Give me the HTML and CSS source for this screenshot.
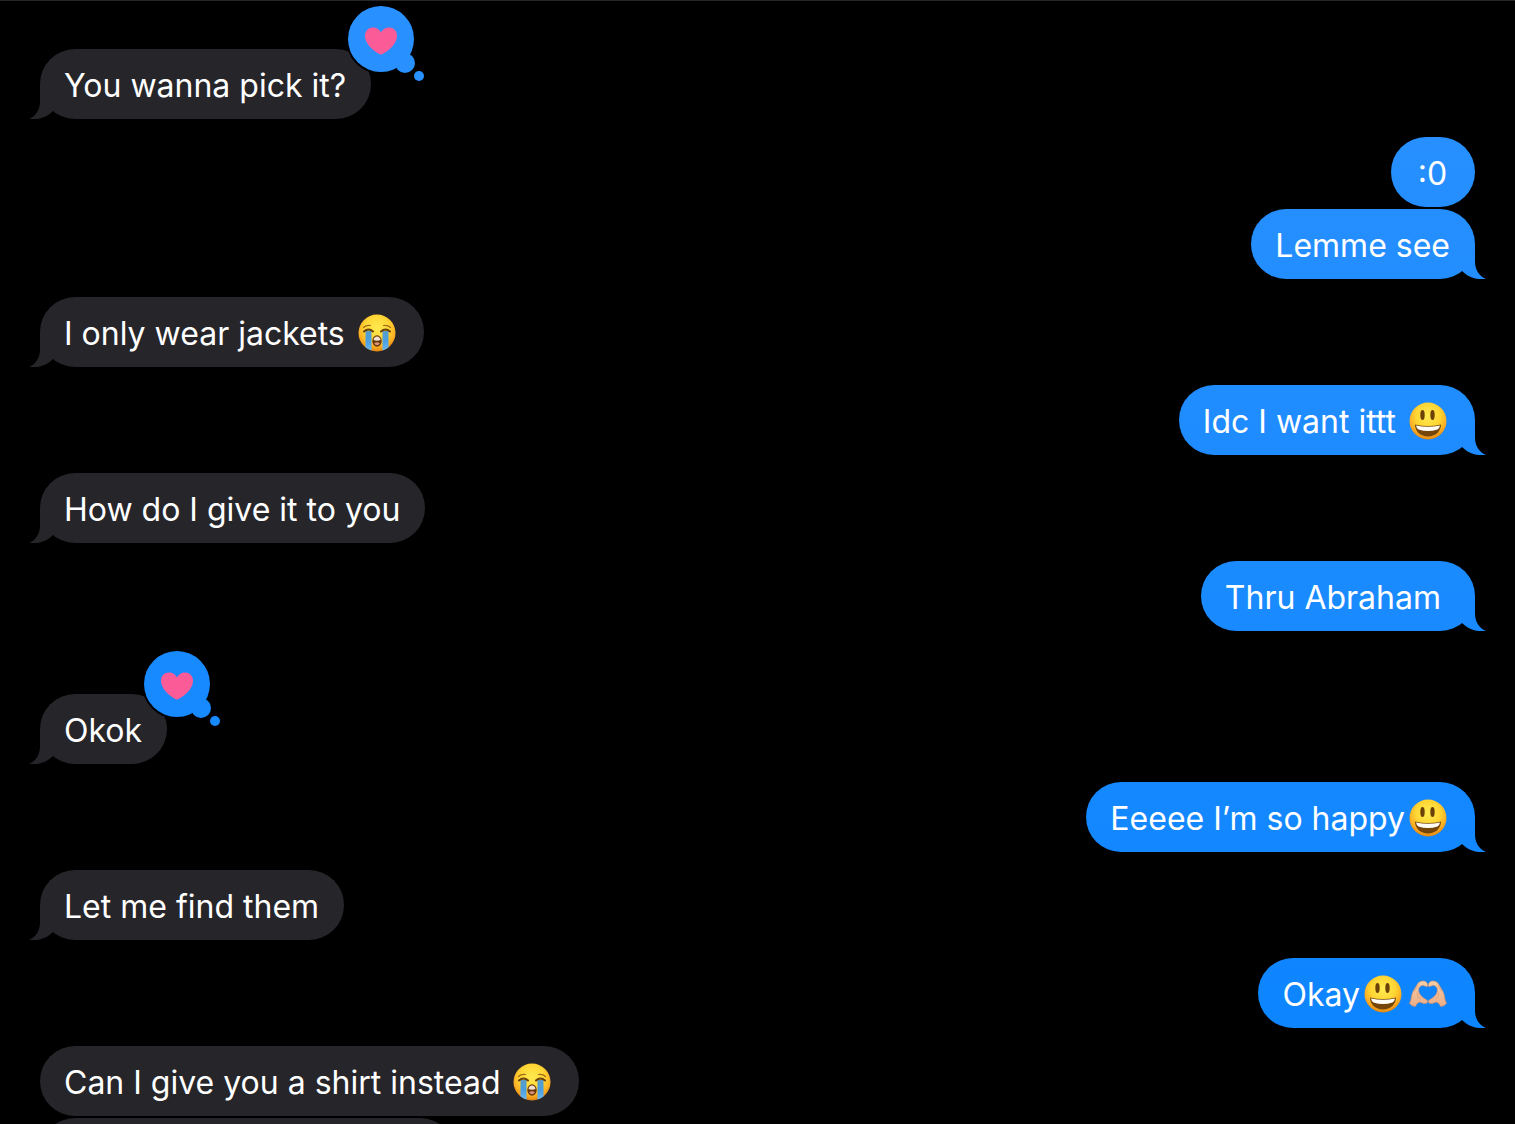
FILE: index.html
```
<!DOCTYPE html>
<html lang="en">
<head>
    <meta charset="UTF-8">
    <meta name="viewport" content="width=device-width, initial-scale=1.0">
    <title>Messages</title>
    <link rel="stylesheet" href="styles.css">
</head>
<body>
    <!-- Shared drawings -->
    <svg class="symbols" aria-hidden="true">
        <defs>
            <radialGradient id="face" cx="50%" cy="36%" r="66%">
                <stop offset="0" stop-color="#ffea50"/>
                <stop offset="0.5" stop-color="#ffd634"/>
                <stop offset="0.78" stop-color="#fbae22"/>
                <stop offset="1" stop-color="#dc7d0e"/>
            </radialGradient>
            <linearGradient id="tear" x1="0" y1="0" x2="0" y2="1">
                <stop offset="0" stop-color="#5a9cc4"/>
                <stop offset="0.5" stop-color="#4a9fe2"/>
                <stop offset="1" stop-color="#68b8f0"/>
            </linearGradient>
            <linearGradient id="skin" x1="0" y1="0" x2="0" y2="1">
                <stop offset="0" stop-color="#f9cfa6"/>
                <stop offset="1" stop-color="#eaac86"/>
            </linearGradient>
        </defs>
        <symbol id="smile" viewBox="0 0 38 38">
            <circle cx="19" cy="19" r="18.5" fill="url(#face)"/>
            <ellipse cx="13.5" cy="13" rx="2.2" ry="5" fill="#6b4108"/>
            <ellipse cx="23.5" cy="13" rx="2.2" ry="5" fill="#6b4108"/>
            <path d="M6 22.5Q19 25.5 32 22.5C32 29.5 26.5 34.5 19 34.5S6 29.5 6 22.5Z" fill="#754509"/>
            <path d="M7 23.5Q19 26 31 23.5Q30.5 26.5 28.5 27.5Q19 30.5 9.5 27.5Q7.5 26.5 7 23.5Z" fill="#fffdf5"/>
        </symbol>
        <symbol id="sob" viewBox="0 0 38 38">
            <circle cx="19" cy="19" r="18.5" fill="url(#face)"/>
            <path d="M7.5 17H13.5V36.5Q10.5 35.5 7.5 33.5ZM24.5 17H30.5V33.5Q27.5 35.5 24.5 36.5Z" fill="url(#tear)"/>
            <path d="M5.5 13.5Q8 11 12.5 11.500M25.5 11.5Q30 11 32.5 13.5" fill="none" stroke="#a06a18" stroke-width="1.2" stroke-linecap="round"/>
            <path d="M6 17.5Q10.5 13.5 15 17.5M23 17.5Q27.5 13.5 32 17.5" fill="none" stroke="#68400a" stroke-width="2" stroke-linecap="round"/>
            <ellipse cx="19" cy="27" rx="4.7" ry="5.7" fill="#6b3509"/>
            <path d="M15.5 26Q16 22.5 19 22.5T22.5 26Q19 27.5 15.5 26Z" fill="#f0e2d2"/>
            <path d="M16 29.5Q19 27 22 29.5Q19 33 16 29.5Z" fill="#d8927a"/>
        </symbol>
        <symbol id="hands" viewBox="0 0 38 38">
            <g id="hand">
                <path d="M0.5 28.5C2.5 25 2 20.5 4 16.5L8.500 9C10.5 6 13.5 5.5 16.5 6.5Q19 8 18.8 11C17.5 12.5 16 10.500 14 10.500C10 10.5 8.5 14.5 10.5 18.5C12 21.5 15 23.500 18 25Q19.5 26.500 18 28C16 29 13.5 28.5 11 27C9 28 7.5 28.500 6.5 31.5Q3 31.5 0.5 28.5Z" fill="url(#skin)" stroke="#cf8964" stroke-width="0.6"/>
                <path d="M5.5 16L9.500 10M8 18Q8.500 22 11 24" fill="none" stroke="#d99a75" stroke-width="0.8" stroke-linecap="round"/>
            </g>
            <use href="#hand" transform="matrix(-1 0 0 1 38 0)"/>
        </symbol>
        <symbol id="love" viewBox="0 0 80 80">
            <g fill="#000" stroke="#000" stroke-width="4">
                <circle cx="35" cy="35" r="33"/>
                <circle cx="59" cy="59" r="9"/>
            </g>
            <g fill="currentColor">
                <circle cx="35" cy="35" r="33"/>
                <circle cx="59" cy="59" r="10"/>
                <circle cx="73" cy="72" r="5"/>
            </g>
            <path d="M35 50.5C33 50.5 19 42 19 32C19 26.5 22.5 23.5 27 23.5C31 23.5 33.5 25.5 35 28.5C36.5 25.5 39 23.5 43 23.5C47.5 23.5 51 26.5 51 32C51 42 37 50.5 35 50.5Z" fill="#fb5c97"/>
        </symbol>
    </svg>

    <!-- Conversation -->
    <main class="chat">
        <ul class="messages">
            <li class="message received tail">
                <p>You wanna pick it?</p>
                <svg class="reaction" role="img" aria-label="Loved"><use href="#love"/></svg>
            </li>
            <li class="message sent">
                <p>:0</p>
            </li>
            <li class="message sent tail grouped">
                <p>Lemme see</p>
            </li>
            <li class="message received tail">
                <p>I only wear jackets <svg class="emoji" role="img" aria-label="Crying"><use href="#sob"/></svg></p>
            </li>
            <li class="message sent tail">
                <p>Idc I want ittt <svg class="emoji" role="img" aria-label="Smiling"><use href="#smile"/></svg></p>
            </li>
            <li class="message received tail">
                <p>How do I give it to you</p>
            </li>
            <li class="message sent tail">
                <p>Thru Abraham&nbsp;</p>
            </li>
            <li class="message received tail reacted">
                <p>Okok</p>
                <svg class="reaction low" role="img" aria-label="Loved"><use href="#love"/></svg>
            </li>
            <li class="message sent tail">
                <p>Eeeee I’m so happy<svg class="emoji" role="img" aria-label="Smiling"><use href="#smile"/></svg></p>
            </li>
            <li class="message received tail">
                <p>Let me find them</p>
            </li>
            <li class="message sent tail">
                <p>Okay<svg class="emoji" role="img" aria-label="Smiling"><use href="#smile"/></svg><svg class="emoji" role="img" aria-label="Heart hands"><use href="#hands"/></svg></p>
            </li>
            <li class="message received">
                <p>Can I give you a shirt instead <svg class="emoji" role="img" aria-label="Crying"><use href="#sob"/></svg></p>
            </li>
            <li class="message received grouped next"></li>
        </ul>
    </main>
</body>
</html>
```

FILE: styles.css
```
* {
    margin: 0;
    padding: 0;
    box-sizing: border-box;
}

body {
    background: #000;
    color: #fff;
    font-family: Inter, "Liberation Sans", sans-serif;
    font-size: 32px;
    line-height: 46px;
}

.symbols {
    position: absolute;
    width: 0;
    height: 0;
}

.chat {
    height: 100vh;
    overflow: hidden;
    border-top: 1px solid #262628;
}

.messages {
    display: flex;
    flex-direction: column;
    padding: 48px 40px 0;
    list-style: none;
}

/* Bubbles */
.message {
    position: relative;
    flex: none;
    max-width: 75%;
    min-width: 84px;
    min-height: 70px;
    margin-bottom: 18px;
    padding: 14px 25px 10px 24px;
    border-radius: 35px;
    text-align: center;
}

.received {
    align-self: flex-start;
    background: #26252a;
}

.sent {
    align-self: flex-end;
    background: linear-gradient(#2b91ff, #0a84ff) fixed;
}

.grouped {
    margin-top: -16px;
}

.reacted {
    margin-top: 45px;
}

.next {
    width: 415px;
}

/* Bubble tails */
.tail::after {
    content: "";
    position: absolute;
    bottom: 0;
    width: 31px;
    height: 35px;
    background: inherit;
}

.sent.tail::after {
    right: -11px;
    clip-path: path("M0 0H20V17C20 26 24 32 31 35C21 36 13 33 7 27Z");
}

.received.tail::after {
    left: -11px;
    clip-path: path("M31 0H11V17C11 26 7 32 0 35C10 36 18 33 24 27Z");
}

/* Emoji and reactions */
.emoji {
    width: 38px;
    height: 38px;
    margin: 0 3px 0 4px;
    vertical-align: -7px;
}

.reaction {
    position: absolute;
    top: -45px;
    right: -55px;
    width: 80px;
    height: 80px;
    color: #2990ff;
}

.reaction.low {
    color: #188aff;
}
```
